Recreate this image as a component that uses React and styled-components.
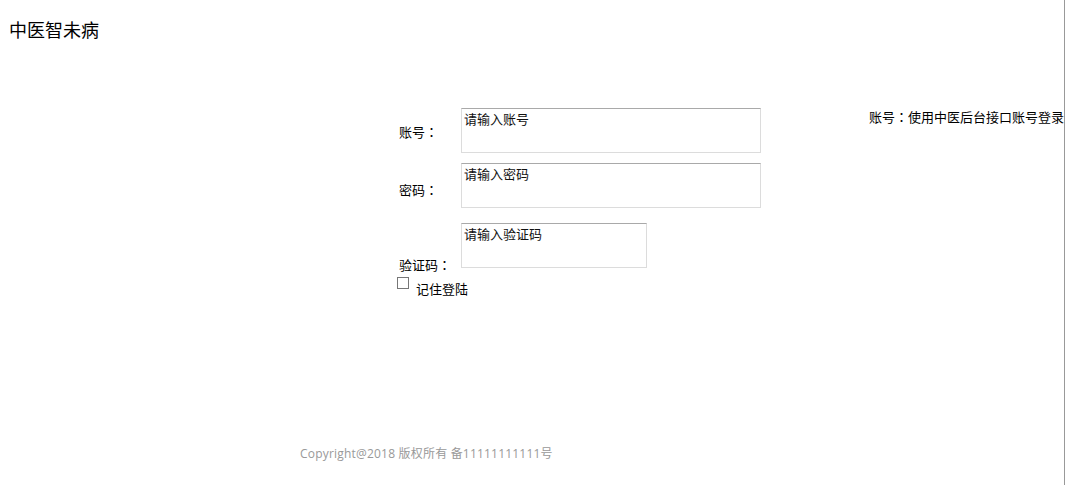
import React from 'react'
import styled, { createGlobalStyle } from 'styled-components'

const GlobalStyle = createGlobalStyle`
  html, body {
    margin: 0;
    padding: 0;
    background: #fff;
  }
  body {
    font-family: "Noto Sans CJK SC", "Liberation Sans", sans-serif;
    color: #000;
  }
`

const Page = styled.div`
  width: 1064px;
  height: 485px;
  border-right: 1px solid #999;
  display: flex;
  flex-direction: column;
  overflow: hidden;
`

const Header = styled.div`
  padding: 17px 0 0 9px;
  height: 108px;
  box-sizing: border-box;
  font-size: 18px;
  line-height: 24px;
`

const Main = styled.div`
  display: flex;
  padding-left: 397px;
`

const Form = styled.div`
  width: 472px;
  display: flex;
  flex-direction: column;
`

const Row = styled.div`
  display: flex;
  align-items: flex-start;
  margin-top: ${p => p.gap || 0}px;
`

const Label = styled.label`
  width: 64px;
  padding-left: 2px;
  box-sizing: border-box;
  margin-top: ${p => p.offset}px;
  font-size: 13px;
  line-height: 16px;
  white-space: nowrap;
`

// full-width colon centred in its box, as in the original
const Colon = styled.span`
  font-family: "Noto Sans CJK TC", "Noto Sans CJK SC", sans-serif;
`

const Field = styled.textarea`
  width: ${p => p.w}px;
  height: 45px;
  box-sizing: border-box;
  margin: 0;
  padding: 2px;
  border: 1px solid #dcdcdc;
  border-top-color: #a9a9a9;
  resize: none;
  font-family: "Noto Sans CJK SC", "Liberation Sans", sans-serif;
  font-size: 13px;
  line-height: 16px;
  outline: none;

  &::placeholder {
    color: #111;
    opacity: 1;
  }
`

const Remember = styled.div`
  display: flex;
  align-items: flex-start;
  margin-top: 4px;
  font-size: 13px;
  line-height: 16px;
`

const Check = styled.input`
  appearance: none;
  width: 12px;
  height: 12px;
  margin: 0 7px 0 0;
  border: 1px solid #777;
  background: #fff;
  box-sizing: border-box;
`

const RememberText = styled.span`
  margin-top: 4px;
`

const Note = styled.div`
  font-size: 13px;
  line-height: 16px;
  padding-top: 1px;
  white-space: nowrap;
`

const Footer = styled.div`
  margin-top: auto;
  margin-bottom: 23px;
  padding-left: 300px;
  font-family: "Open Sans", "Noto Sans CJK SC", sans-serif;
  font-size: 12px;
  line-height: 16px;
  letter-spacing: 0.2px;
  color: #999;
`

function App() {
  return (
    <>
      <GlobalStyle />
      <Page>
        <Header>中医智未病</Header>
        <Main>
          <Form>
            <Row>
              <Label offset={16}>账号<Colon>：</Colon></Label>
              <Field w={300} placeholder="请输入账号" />
            </Row>
            <Row gap={10}>
              <Label offset={19}>密码<Colon>：</Colon></Label>
              <Field w={300} placeholder="请输入密码" />
            </Row>
            <Row gap={15}>
              <Label offset={34}>验证码<Colon>：</Colon></Label>
              <Field w={186} placeholder="请输入验证码" />
            </Row>
            <Remember>
              <Check type="checkbox" />
              <RememberText>记住登陆</RememberText>
            </Remember>
          </Form>
          <Note>账号<Colon>：</Colon>使用中医后台接口账号登录</Note>
        </Main>
        <Footer>Copyright@2018 版权所有 备11111111111号</Footer>
      </Page>
    </>
  )
}

export default App
